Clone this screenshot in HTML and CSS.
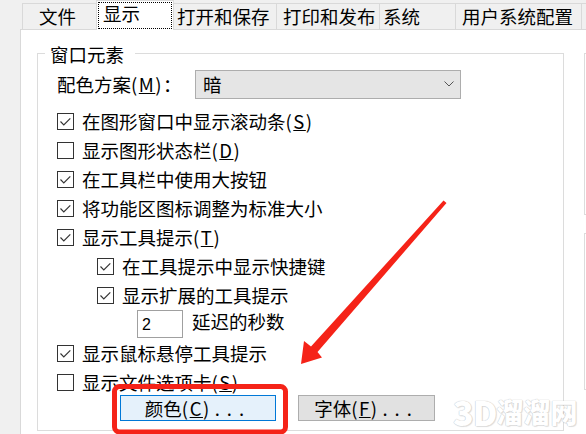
FILE: index.html
```html
<!DOCTYPE html>
<html lang="zh-CN">
<head>
<meta charset="utf-8">
<title>选项 - 显示</title>
<link rel="stylesheet" href="styles.css">
</head>
<body>
<div class="dialog">
  <div class="tabs">
    <div class="tab t-file">文件</div>
    <div class="tab sel"><span class="focus">显示</span></div>
    <div class="tab t-open">打开和保存</div>
    <div class="tab t-plot">打印和发布</div>
    <div class="tab t-sys">系统</div>
    <div class="tab t-user">用户系统配置</div>
    <div class="tab t-more"></div>
  </div>

  <div class="page">
    <div class="group main">
      <div class="legend">窗口元素</div>

      <div class="scheme">
        <span class="scheme-label">配色方案<span class="m">(<u>M</u>)</span>：</span>
        <div class="select">
          <span>暗</span>
          <svg class="chev" width="10" height="6" viewBox="0 0 10 6"><path d="M0.5 0.5 L5 5 L9.5 0.5" fill="none" stroke="#555" stroke-width="1"/></svg>
        </div>
      </div>

      <div class="check first"><span class="box on"></span><span>在图形窗口中显示滚动条<span class="m">(<u>S</u>)</span></span></div>
      <div class="check"><span class="box"></span><span>显示图形状态栏<span class="m">(<u>D</u>)</span></span></div>
      <div class="check"><span class="box on"></span><span>在工具栏中使用大按钮</span></div>
      <div class="check"><span class="box on"></span><span>将功能区图标调整为标准大小</span></div>
      <div class="check"><span class="box on"></span><span>显示工具提示<span class="m">(<u>T</u>)</span></span></div>
      <div class="check sub"><span class="box on"></span><span>在工具提示中显示快捷键</span></div>
      <div class="check sub"><span class="box on"></span><span>显示扩展的工具提示</span></div>
      <div class="delay"><span class="spin">2</span><span>延迟的秒数</span></div>
      <div class="check"><span class="box on"></span><span>显示鼠标悬停工具提示</span></div>
      <div class="check"><span class="box"></span><span>显示文件选项卡<span class="m">(<u>S</u>)</span></span></div>

      <div class="buttons">
        <div class="btn primary">颜色<span class="m">(<u>C</u>)</span><span class="dots">...</span></div>
        <div class="btn font">字体<span class="m">(<u>F</u>)</span><span class="dots">...</span></div>
      </div>
    </div>

    <div class="side">
      <div class="group side-a"></div>
      <div class="group side-b"></div>
    </div>
  </div>
</div>

<!-- red callout: frame round the colour button and the pointer to it -->
<svg class="callout" width="586" height="434" viewBox="0 0 586 434">
  <rect x="114.5" y="386.5" width="171" height="45.5" rx="5" ry="5" fill="none" stroke="#f52318" stroke-width="5"/>
  <polygon points="443.5,200.5 446.5,203 317.5,352 322,357.5 301,364 304,341 311,346.5" fill="#f52318"/>
</svg>

<div class="watermark"><span class="wm-num">3D</span><span class="wm-cn">溜溜网</span></div>
</body>
</html>
```

FILE: styles.css
```css
body {
  margin: 0;
  width: 586px;
  height: 434px;
  overflow: hidden;
  position: relative;
  background: #f0f0f0;
  color: #000;
  font-family: "Noto Sans CJK SC", "Noto Sans", sans-serif;
  font-size: 18.5px;
}

.dialog {
  width: 700px;
}

/* ---------- tab strip ---------- */
.tabs {
  display: flex;
  align-items: flex-end;
  height: 29px;
  padding-left: 22px;
}

.tab {
  box-sizing: border-box;
  flex: none;
  height: 26px;
  border: 1px solid #d9d9d9;
  border-bottom: none;
  border-right: none;
  background: #f0f0f0;
  line-height: 25px;
  white-space: nowrap;
}

.t-file { width: 74px; padding-left: 16px; }
.t-open { width: 102px; padding-left: 3px; }
.t-plot { width: 103px; padding-left: 6px; }
.t-sys  { width: 76px;  padding-left: 3px; }
.t-user { width: 126px; padding-left: 6px; }
.t-more { width: 30px; }

.tab.sel {
  width: 78px;
  height: 30px;
  margin-bottom: -1px;
  background: #fff;
  border-right: 1px solid #d9d9d9;
  position: relative;
  z-index: 1;
  display: flex;
  padding: 1px;
}

.sel + .tab {
  border-left: none;
}

.focus {
  flex: 1;
  height: 27px;
  box-sizing: border-box;
  border: 1px dotted #000;
  padding-left: 4px;
  line-height: 20px;
}

/* ---------- page ---------- */
.page {
  box-sizing: border-box;
  margin-left: 20px;
  height: 405px;
  background: #fff;
  border-top: 1px solid #d9d9d9;
  border-left: 1px solid #d9d9d9;
  padding: 23px 0 0 16px;
  display: flex;
  gap: 20px;
  position: relative;
}

.group {
  box-sizing: border-box;
  border: 1px solid #dcdcdc;
  flex: none;
}

.main {
  width: 527px;
  height: 378px;
  padding-left: 19px;
  display: flex;
  flex-direction: column;
  align-items: flex-start;
}

.legend {
  margin: -12px 0 0 -12px;
  padding: 0 11px 0 5px;
  background: #fff;
  line-height: 24px;
}

.side {
  flex: none;
  display: flex;
  flex-direction: column;
  gap: 18px;
}

.side-a { width: 60px; height: 162px; }
.side-b { width: 60px; height: 157px; }

/* ---------- colour scheme row ---------- */
.scheme {
  margin-top: 4px;
  height: 29px;
  display: flex;
  align-items: center;
}

.scheme-label {
  width: 138px;
  line-height: 29px;
}

.select {
  box-sizing: border-box;
  width: 266px;
  height: 29px;
  border: 1px solid #adadad;
  background: #e5e5e5;
  display: flex;
  align-items: center;
  justify-content: space-between;
  padding: 0 6px 0 7px;
  line-height: 27px;
}

.chev {
  margin-bottom: 2px;
}

/* ---------- check boxes ---------- */
.check {
  height: 29px;
  display: flex;
  align-items: center;
  gap: 8px;
  line-height: 29px;
  white-space: nowrap;
}

.check.first {
  margin-top: 8px;
}

.check.sub {
  margin-left: 40px;
}

.box {
  box-sizing: border-box;
  width: 17px;
  height: 17px;
  border: 1px solid #333;
  background: #fff;
  flex: none;
}

.box.on {
  background: #fff url("data:image/svg+xml;utf8,<svg xmlns='http://www.w3.org/2000/svg' width='15' height='15' viewBox='0 0 15 15'><path d='M2.5 7.5 L5.8 10.8 L12.3 4.3' fill='none' stroke='%23333' stroke-width='1.2'/></svg>") no-repeat center;
}

.m {
  letter-spacing: 1.5px;
}

/* ---------- delay spinner ---------- */
.delay {
  height: 29px;
  margin-left: 80px;
  display: flex;
  align-items: flex-start;
  gap: 9px;
  line-height: 27px;
}

.spin {
  box-sizing: border-box;
  width: 46px;
  height: 28px;
  border: 1px solid #a0a0a0;
  padding-left: 4px;
  font-family: "Liberation Sans", sans-serif;
  font-size: 16px;
  line-height: 28px;
}

.delay span:last-child {
  line-height: 22px;
}

/* ---------- buttons ---------- */
.buttons {
  margin: -2px 0 0 63px;
  display: flex;
  gap: 22px;
}

.btn {
  box-sizing: border-box;
  height: 26px;
  border: 1px solid #adadad;
  background: #e1e1e1;
  text-align: center;
  line-height: 24px;
  white-space: nowrap;
}

.btn.primary {
  width: 156px;
  border-color: #0078d7;
  background: #e5f1fb;
}

.btn.font {
  width: 137px;
}

.dots {
  letter-spacing: 7px;
  margin-left: 4px;
}

/* ---------- overlays ---------- */
.callout {
  position: absolute;
  left: 0;
  top: 0;
  pointer-events: none;
}

.watermark {
  position: absolute;
  left: 453px;
  top: 395px;
  height: 34px;
  display: flex;
  align-items: center;
  font-family: "Noto Sans CJK SC", sans-serif;
  font-weight: 900;
  color: #fff;
  white-space: nowrap;
  text-shadow: 0 0 1px #c8c8c8, 0 0 1px #c8c8c8, 1px 1px 1px rgba(0, 0, 0, 0.12);
}

.wm-num {
  font-size: 34px;
  line-height: 34px;
  height: 34px;
  letter-spacing: -1px;
}

.wm-cn {
  font-size: 27px;
  line-height: 34px;
  height: 34px;
}
```
